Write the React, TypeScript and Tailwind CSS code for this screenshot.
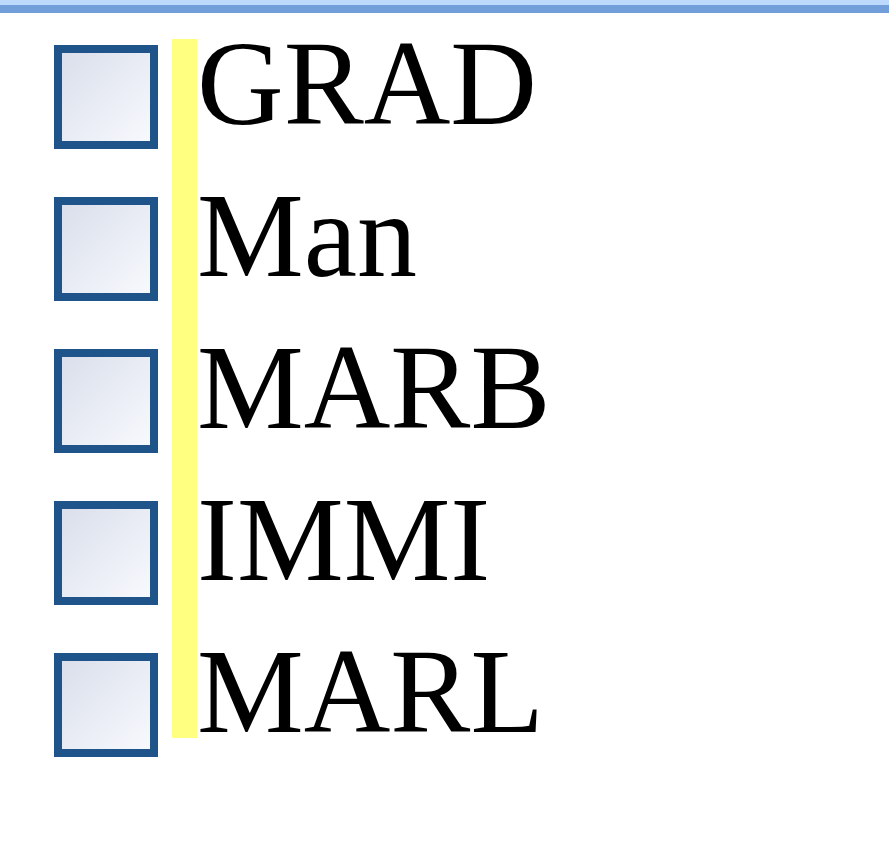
export default function App() {
  const items = ["GRAD", "Man", "MARB", "IMMI", "MARL"];

  return (
    <div className="min-h-[865px] w-[889px] bg-white">
      <div className="h-[5px] bg-[#bddafc]" />
      <div className="h-[8px] bg-[#729ed9]" />

      <div className="flex">
        <div className="flex flex-col gap-[48px] pl-[54px] pt-[32px]">
          {items.map((item) => (
            <div
              key={item}
              className="h-[104px] w-[104px] border-[8px] border-[#1e548a] bg-gradient-to-br from-[#dadfeb] to-[#f7f9fd]"
            />
          ))}
        </div>

        <div className="ml-[14px] mt-[26px] h-[699px] w-[25px] bg-[#ffff80]" />

        <div
          className="flex flex-col gap-[32px] pt-[11px] text-[120px] leading-[120px] text-black"
          style={{ fontFamily: '"Liberation Serif", "Times New Roman", serif' }}
        >
          {items.map((item) => (
            <div key={item}>{item}</div>
          ))}
        </div>
      </div>
    </div>
  );
}
